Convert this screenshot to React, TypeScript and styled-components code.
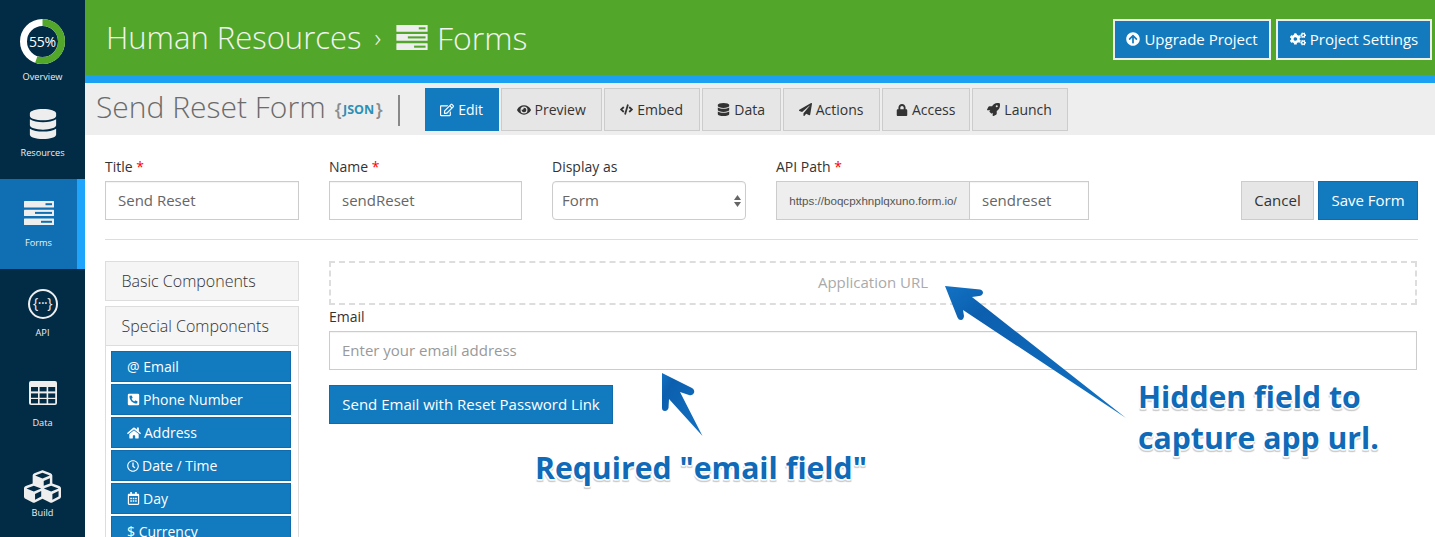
import React from "react";
import styled, { createGlobalStyle } from "styled-components";
import {
  FaDatabase, FaCubes, FaRegEdit, FaEye, FaCode, FaPaperPlane, FaLock, FaRocket,
  FaArrowCircleUp, FaCogs, FaPhoneSquareAlt, FaHome, FaRegClock, FaRegCalendarAlt,
} from "react-icons/fa";

const Global = createGlobalStyle`
  html, body { margin: 0; padding: 0; background: #fff; }
  body { font-family: "Open Sans", "Liberation Sans", sans-serif; color: #333; overflow: hidden; }
  * { box-sizing: border-box; }
`;

const Page = styled.div`
  position: relative;
  display: flex;
  width: 1435px;
  height: 537px;
  overflow: hidden;
`;

const Sidebar = styled.nav`
  width: 85px;
  flex: none;
  background: #022b45;
  display: flex;
  flex-direction: column;
`;

const NavItem = styled.div<{ $active?: boolean; $first?: boolean; $gap?: number }>`
  height: ${(p) => (p.$first ? 89 : 90)}px;
  flex: none;
  display: flex;
  flex-direction: column;
  align-items: center;
  justify-content: flex-end;
  gap: ${(p) => p.$gap ?? 9}px;
  padding-bottom: ${(p) => (p.$first ? 6 : 20)}px;
  background: ${(p) => (p.$active ? "#0f6fb2" : "transparent")};
  border-right: ${(p) => (p.$active ? "8px solid #1ea5fb" : "0")};
  color: #eee;
`;

const NavIcon = styled.div<{ $h?: number }>`
  height: ${(p) => p.$h ?? 30}px;
  display: flex;
  align-items: center;
  justify-content: center;
  color: #eee;
`;

const NavLabel = styled.div`
  font-size: 9.2px;
  line-height: 12px;
  color: #f0f0f0;
`;

const Donut = styled.div`
  position: relative;
  width: 45px;
  height: 45px;
`;

const DonutText = styled.span`
  position: absolute;
  inset: 0;
  display: flex;
  align-items: center;
  justify-content: center;
  font-size: 14px;
  color: #fff;
  letter-spacing: -0.2px;
`;

const ApiCircle = styled.div`
  width: 30px;
  height: 30px;
  border: 2px solid #eee;
  border-radius: 50%;
  display: flex;
  align-items: center;
  justify-content: center;
  font-size: 14px;
  line-height: 1;
  color: #eee;
  padding-bottom: 2px;
  letter-spacing: -0.5px;
  white-space: nowrap;
`;

const Main = styled.div`
  flex: 1;
  min-width: 0;
  display: flex;
  flex-direction: column;
`;

const Header = styled.header`
  height: 83px;
  flex: none;
  background: #52a72a;
  border-bottom: 8px solid #1ca0f2;
  display: flex;
  align-items: flex-start;
  justify-content: space-between;
  padding: 19px 3px 0 21px;
`;

const Crumbs = styled.div`
  display: flex;
  align-items: center;
  height: 36px;
  font-size: 31px;
  font-weight: 300;
  color: #f3f3f3;
  white-space: nowrap;
`;

const CrumbSep = styled.span`
  margin: 0 15px 0 13px;
  font-size: 26px;
`;

const CrumbTail = styled.span`
  margin-left: 9px;
  font-size: 32px;
`;

const HeaderActions = styled.div`
  display: flex;
  gap: 5px;
`;

const HeaderButton = styled.div<{ $w: number }>`
  width: ${(p) => p.$w}px;
  height: 41px;
  background: #137abd;
  border: 2px solid #eee;
  color: #fff;
  display: flex;
  align-items: center;
  justify-content: center;
  gap: 4px;
  font-size: 15px;
  padding-bottom: 2px;
  white-space: nowrap;
`;

const SubHeader = styled.div`
  height: 52px;
  flex: none;
  background: #eee;
  display: flex;
  align-items: flex-start;
  padding: 5px 0 0 11px;
`;

const FormTitle = styled.div`
  font-size: 30px;
  font-weight: 300;
  color: #6b6b6b;
  line-height: 38px;
  white-space: nowrap;
`;

const JsonTag = styled.div`
  margin: 9px 0 0 9px;
  width: 48px;
  display: flex;
  align-items: center;
  justify-content: space-between;
  height: 24px;
  color: #8c8c8c;
  font-size: 18px;
  font-weight: 600;
`;

const JsonWord = styled.span`
  color: #2f8fb5;
  font-size: 12.5px;
  font-weight: 700;
`;

const TitleBar = styled.div`
  width: 2px;
  height: 31px;
  background: #888;
  margin: 7px 25px 0 15px;
`;

const Tabs = styled.div`
  display: flex;
  gap: 2px;
`;

const Tab = styled.div<{ $w: number; $active?: boolean }>`
  width: ${(p) => p.$w}px;
  height: 43px;
  background: ${(p) => (p.$active ? "#127abf" : "#e6e6e6")};
  border: 1px solid ${(p) => (p.$active ? "#127abf" : "#ccc")};
  color: ${(p) => (p.$active ? "#fff" : "#333")};
  display: flex;
  align-items: center;
  justify-content: center;
  gap: 4px;
  font-size: 14px;
  white-space: nowrap;
`;

const Content = styled.div`
  flex: 1;
  padding: 0 17px 0 20px;
  min-height: 0;
`;

const SettingsRow = styled.div`
  display: flex;
  align-items: flex-start;
  padding-top: 22px;
  height: 105px;
  border-bottom: 1px solid #ddd;
`;

const Group = styled.div<{ $w: number }>`
  width: ${(p) => p.$w}px;
  margin-right: 30px;
  flex: none;
`;

const Label = styled.div`
  font-size: 14px;
  line-height: 20px;
  height: 24px;
  color: #333;
  white-space: nowrap;
`;

const Req = styled.span`
  color: #f00;
`;

const Field = styled.div<{ $placeholder?: boolean; $select?: boolean }>`
  height: 39px;
  border: 1px solid #ccc;
  border-radius: ${(p) => (p.$select ? 4 : 0)}px;
  background: #fff;
  display: flex;
  align-items: center;
  justify-content: space-between;
  padding: 0 ${(p) => (p.$select ? "4px 2px 9px" : "9px 2px 12px")};
  font-size: 15px;
  color: ${(p) => (p.$placeholder ? "#999" : "#666")};
  box-shadow: inset 0 1px 1px rgba(0, 0, 0, 0.05);
  flex: 1;
  white-space: nowrap;
`;

const InputGroup = styled.div`
  display: flex;
  height: 39px;
`;

const Addon = styled.div`
  width: 193px;
  flex: none;
  background: #eee;
  border: 1px solid #ccc;
  border-right: 0;
  display: flex;
  align-items: center;
  justify-content: center;
  font-family: "Liberation Sans", Arial, sans-serif;
  font-size: 11.6px;
  color: #555;
  white-space: nowrap;
`;

const Spin = styled.div`
  display: flex;
  flex-direction: column;
  gap: 2px;
  margin-top: 2px;
`;

const RowActions = styled.div`
  margin-left: auto;
  padding-top: 24px;
  display: flex;
  gap: 4px;
`;

const Button = styled.div<{ $w: number; $variant?: "default" | "primary" }>`
  width: ${(p) => p.$w}px;
  height: 39px;
  display: flex;
  align-items: center;
  justify-content: center;
  padding-bottom: 2px;
  font-size: 15px;
  white-space: nowrap;
  background: ${(p) => (p.$variant === "default" ? "#e6e6e6" : "#127abf")};
  border: 1px solid ${(p) => (p.$variant === "default" ? "#ccc" : "#0f6bab")};
  color: ${(p) => (p.$variant === "default" ? "#333" : "#fff")};
`;

const Builder = styled.div`
  display: flex;
  gap: 30px;
  padding-top: 21px;
`;

const Palette = styled.aside`
  width: 194px;
  flex: none;
  display: flex;
  flex-direction: column;
  gap: 5px;
`;

const Panel = styled.div`
  border: 1px solid #ddd;
`;

const PanelHead = styled.div<{ $divided?: boolean }>`
  height: ${(p) => (p.$divided ? 39 : 38)}px;
  background: #f5f5f5;
  display: flex;
  align-items: center;
  padding-left: 15.5px;
  font-size: 16px;
  font-weight: 300;
  color: #333;
  border-bottom: ${(p) => (p.$divided ? "1px solid #ddd" : "0")};
`;

const PanelBody = styled.div`
  padding: 5px 7px 0 5px;
  display: flex;
  flex-direction: column;
  gap: 2px;
`;

const CompButton = styled.div`
  height: 31px;
  flex: none;
  background: #127abf;
  border: 1px solid #0f6bab;
  color: #fff;
  font-size: 14px;
  display: flex;
  align-items: center;
  gap: 3px;
  padding-left: 15px;
  white-space: nowrap;
`;

const Canvas = styled.div`
  flex: 1;
  min-width: 0;
  margin-right: 1px;
`;

const HiddenField = styled.div`
  height: 44px;
  border: 2px dashed #ddd;
  display: flex;
  align-items: center;
  justify-content: center;
  padding-bottom: 3px;
  font-size: 15px;
  color: #aaa;
`;

const EmailLabel = styled(Label)`
  margin-top: 1px;
  height: 25px;
  padding-top: 1px;
`;

const EmailField = styled(Field)`
  flex: none;
`;

const SendButton = styled(Button)`
  margin-top: 15px;
`;

const Overlay = styled.svg`
  position: absolute;
  left: 0;
  top: 0;
  pointer-events: none;
`;

const Note = styled.div<{ $x: number; $y: number }>`
  position: absolute;
  left: ${(p) => p.$x}px;
  top: ${(p) => p.$y}px;
  font-size: 30.2px;
  line-height: 41px;
  font-weight: 700;
  color: #0f6ab8;
  white-space: nowrap;
  text-shadow: -1px -1px 0 #fff, 1px -1px 0 #fff, -1px 1px 0 #fff, 1px 1px 0 #fff,
    0 -2px 0 #fff, 2px 0 0 #fff, -2px 0 0 #fff, 0 2px 0 #eee, 1px 3px 1px #ccc, -1px 3px 1px #ccc;
`;

const FormsGlyph = ({ w, h, slot }: { w: number; h: number; slot: string }) => (
  <svg width={w} height={h} viewBox="0 0 30 24" fill="none">
    <rect x="0" y="0" width="30" height="6.4" rx="0.5" fill="#eee" />
    <rect x="0" y="8.7" width="30" height="6.4" rx="0.5" fill="#eee" />
    <rect x="0" y="17.6" width="30" height="6.4" rx="0.5" fill="#eee" />
    <rect x="21.5" y="2.2" width="6.5" height="2" fill={slot} />
    <rect x="11" y="10.9" width="17" height="2" fill={slot} />
    <rect x="17" y="19.8" width="11" height="2" fill={slot} />
  </svg>
);

const TableGlyph = () => (
  <svg width="28" height="24" viewBox="0 0 28 24">
    <rect width="28" height="24" rx="2" fill="#eee" />
    {[6, 12.4, 18].map((y) =>
      [2, 10.6, 19.2].map((x) => (
        <rect key={`${x}-${y}`} x={x} y={y} width="7" height="4.4" fill="#022b45" />
      ))
    )}
  </svg>
);

const tabs: { label: string; w: number; icon: React.ReactNode; active?: boolean }[] = [
  { label: "Edit", w: 74, icon: <FaRegEdit size={14} />, active: true },
  { label: "Preview", w: 101, icon: <FaEye size={14} /> },
  { label: "Embed", w: 96, icon: <FaCode size={13} /> },
  { label: "Data", w: 79, icon: <FaDatabase size={13} /> },
  { label: "Actions", w: 97, icon: <FaPaperPlane size={13} /> },
  { label: "Access", w: 88, icon: <FaLock size={12} /> },
  { label: "Launch", w: 96, icon: <FaRocket size={13} /> },
];

const components: { label: string; icon?: React.ReactNode }[] = [
  { label: "@ Email" },
  { label: "Phone Number", icon: <FaPhoneSquareAlt size={13} /> },
  { label: "Address", icon: <FaHome size={14} /> },
  { label: "Date / Time", icon: <FaRegClock size={12} /> },
  { label: "Day", icon: <FaRegCalendarAlt size={13} /> },
  { label: "$ Currency" },
];

export default function App() {
  return (
    <Page>
      <Global />
      <Sidebar>
        <NavItem $first $gap={7}>
          <NavIcon $h={45}>
            <Donut>
              <svg width="45" height="45" viewBox="0 0 45 45">
                <circle cx="22.5" cy="22.5" r="19" fill="none" stroke="#fff" strokeWidth="7" />
                <circle
                  cx="22.5" cy="22.5" r="19" fill="none" stroke="#52a72a" strokeWidth="7"
                  strokeDasharray={`${2 * Math.PI * 19 * 0.55} 200`}
                  transform="rotate(-90 22.5 22.5)"
                />
              </svg>
              <DonutText>55%</DonutText>
            </Donut>
          </NavIcon>
          <NavLabel>Overview</NavLabel>
        </NavItem>
        <NavItem $gap={8}>
          <NavIcon><FaDatabase size={30} /></NavIcon>
          <NavLabel>Resources</NavLabel>
        </NavItem>
        <NavItem $active>
          <NavIcon><FormsGlyph w={30} h={24} slot="#0f6fb2" /></NavIcon>
          <NavLabel>Forms</NavLabel>
        </NavItem>
        <NavItem $gap={8}>
          <NavIcon><ApiCircle>{"{···}"}</ApiCircle></NavIcon>
          <NavLabel>API</NavLabel>
        </NavItem>
        <NavItem>
          <NavIcon><TableGlyph /></NavIcon>
          <NavLabel>Data</NavLabel>
        </NavItem>
        <NavItem $gap={3}>
          <NavIcon $h={35}><FaCubes size={37} /></NavIcon>
          <NavLabel>Build</NavLabel>
        </NavItem>
      </Sidebar>
      <Main>
        <Header>
          <Crumbs>
            Human Resources
            <CrumbSep>›</CrumbSep>
            <FormsGlyph w={32} h={25} slot="#52a72a" />
            <CrumbTail>Forms</CrumbTail>
          </Crumbs>
          <HeaderActions>
            <HeaderButton $w={158}><FaArrowCircleUp size={14} />Upgrade Project</HeaderButton>
            <HeaderButton $w={156}><FaCogs size={16} />Project Settings</HeaderButton>
          </HeaderActions>
        </Header>
        <SubHeader>
          <FormTitle>Send Reset Form</FormTitle>
          <JsonTag>{"{"}<JsonWord>JSON</JsonWord>{"}"}</JsonTag>
          <TitleBar />
          <Tabs>
            {tabs.map((t) => (
              <Tab key={t.label} $w={t.w} $active={t.active}>{t.icon}{t.label}</Tab>
            ))}
          </Tabs>
        </SubHeader>
        <Content>
          <SettingsRow>
            <Group $w={194}>
              <Label>Title <Req>*</Req></Label>
              <InputGroup><Field>Send Reset</Field></InputGroup>
            </Group>
            <Group $w={193}>
              <Label>Name <Req>*</Req></Label>
              <InputGroup><Field>sendReset</Field></InputGroup>
            </Group>
            <Group $w={194}>
              <Label>Display as</Label>
              <InputGroup>
                <Field $select>
                  Form
                  <Spin>
                    <svg width="7" height="5" viewBox="0 0 7 5"><path d="M3.5 0 7 5H0z" fill="#666" /></svg>
                    <svg width="7" height="5" viewBox="0 0 7 5"><path d="M3.5 5 7 0H0z" fill="#666" /></svg>
                  </Spin>
                </Field>
              </InputGroup>
            </Group>
            <Group $w={313}>
              <Label>API Path <Req>*</Req></Label>
              <InputGroup>
                <Addon>https://boqcpxhnplqxuno.form.io/</Addon>
                <Field>sendreset</Field>
              </InputGroup>
            </Group>
            <RowActions>
              <Button $w={73} $variant="default">Cancel</Button>
              <Button $w={100}>Save Form</Button>
            </RowActions>
          </SettingsRow>
          <Builder>
            <Palette>
              <Panel><PanelHead>Basic Components</PanelHead></Panel>
              <Panel>
                <PanelHead $divided>Special Components</PanelHead>
                <PanelBody>
                  {components.map((c) => (
                    <CompButton key={c.label}>{c.icon}{c.label}</CompButton>
                  ))}
                </PanelBody>
              </Panel>
            </Palette>
            <Canvas>
              <HiddenField>Application URL</HiddenField>
              <EmailLabel>Email</EmailLabel>
              <EmailField $placeholder>Enter your email address</EmailField>
              <SendButton $w={284}>Send Email with Reset Password Link</SendButton>
            </Canvas>
          </Builder>
        </Content>
      </Main>

      <Overlay width="1435" height="537" viewBox="0 0 1435 537">
        <defs>
          <linearGradient id="ar" x1="0" y1="0" x2="1" y2="1">
            <stop offset="0" stopColor="#1272c4" />
            <stop offset="0.2" stopColor="#0c5fae" />
            <stop offset="1" stopColor="#1272c4" />
          </linearGradient>
        </defs>
        <path
          d="M945 286 L980 289.5 Q983 290 983 293 Q982 296 979 296 L972 297 L1126 418 L963 310 L964 316 Q963.5 320 961 320 Q958.5 320 957.5 317.5 Z"
          fill="url(#ar)"
        />
        <path
          d="M662 373 L692 388 Q695 390 694 393 Q692 396 689 395 L680 392 L702.5 436 L669 399 L668.5 408 Q667.5 411 665 411 Q662 411 662 408 Z"
          fill="url(#ar)"
        />
      </Overlay>
      <Note $x={535} $y={447}>Required "email field"</Note>
      <Note $x={1138} $y={376}>Hidden field to<br />capture app url.</Note>
    </Page>
  );
}
